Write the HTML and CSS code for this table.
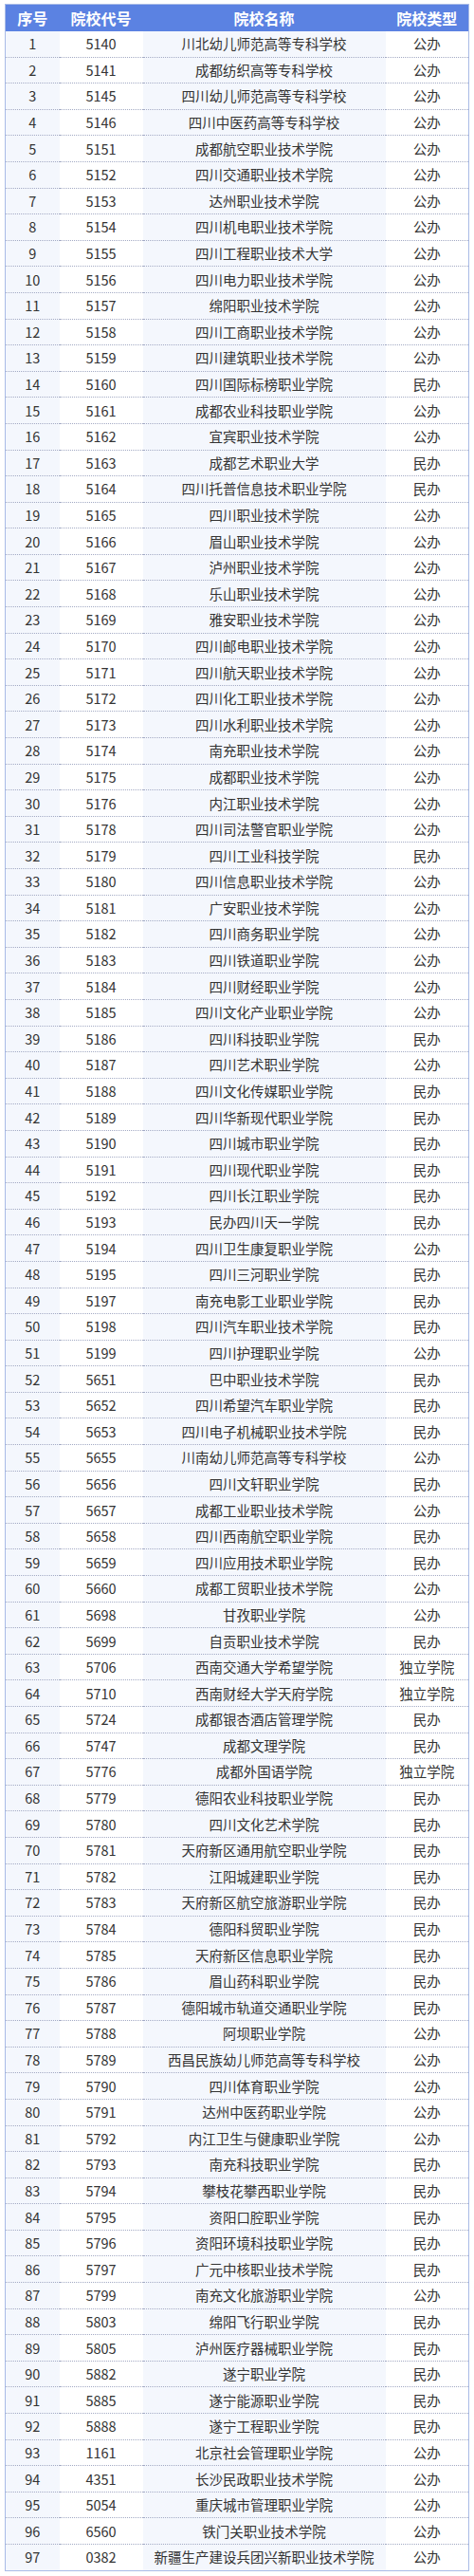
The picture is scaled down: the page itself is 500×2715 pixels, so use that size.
FILE: index.html
```html
<!DOCTYPE html>
<html lang="zh-CN">
<head>
<meta charset="utf-8">
<title>院校列表</title>
<link rel="stylesheet" href="styles.css">
</head>
<body>
<div class="wrap">
<table class="schools">
<colgroup><col class="c1"><col class="c2"><col class="c3"><col class="c4"></colgroup>
<thead>
<tr><th>序号</th><th>院校代号</th><th>院校名称</th><th>院校类型</th></tr>
</thead>
<tbody id="rows">
<tr><td>1</td><td>5140</td><td>川北幼儿师范高等专科学校</td><td>公办</td></tr>
<tr><td>2</td><td>5141</td><td>成都纺织高等专科学校</td><td>公办</td></tr>
<tr><td>3</td><td>5145</td><td>四川幼儿师范高等专科学校</td><td>公办</td></tr>
<tr><td>4</td><td>5146</td><td>四川中医药高等专科学校</td><td>公办</td></tr>
<tr><td>5</td><td>5151</td><td>成都航空职业技术学院</td><td>公办</td></tr>
<tr><td>6</td><td>5152</td><td>四川交通职业技术学院</td><td>公办</td></tr>
<tr><td>7</td><td>5153</td><td>达州职业技术学院</td><td>公办</td></tr>
<tr><td>8</td><td>5154</td><td>四川机电职业技术学院</td><td>公办</td></tr>
<tr><td>9</td><td>5155</td><td>四川工程职业技术大学</td><td>公办</td></tr>
<tr><td>10</td><td>5156</td><td>四川电力职业技术学院</td><td>公办</td></tr>
<tr><td>11</td><td>5157</td><td>绵阳职业技术学院</td><td>公办</td></tr>
<tr><td>12</td><td>5158</td><td>四川工商职业技术学院</td><td>公办</td></tr>
<tr><td>13</td><td>5159</td><td>四川建筑职业技术学院</td><td>公办</td></tr>
<tr><td>14</td><td>5160</td><td>四川国际标榜职业学院</td><td>民办</td></tr>
<tr><td>15</td><td>5161</td><td>成都农业科技职业学院</td><td>公办</td></tr>
<tr><td>16</td><td>5162</td><td>宜宾职业技术学院</td><td>公办</td></tr>
<tr><td>17</td><td>5163</td><td>成都艺术职业大学</td><td>民办</td></tr>
<tr><td>18</td><td>5164</td><td>四川托普信息技术职业学院</td><td>民办</td></tr>
<tr><td>19</td><td>5165</td><td>四川职业技术学院</td><td>公办</td></tr>
<tr><td>20</td><td>5166</td><td>眉山职业技术学院</td><td>公办</td></tr>
<tr><td>21</td><td>5167</td><td>泸州职业技术学院</td><td>公办</td></tr>
<tr><td>22</td><td>5168</td><td>乐山职业技术学院</td><td>公办</td></tr>
<tr><td>23</td><td>5169</td><td>雅安职业技术学院</td><td>公办</td></tr>
<tr><td>24</td><td>5170</td><td>四川邮电职业技术学院</td><td>公办</td></tr>
<tr><td>25</td><td>5171</td><td>四川航天职业技术学院</td><td>公办</td></tr>
<tr><td>26</td><td>5172</td><td>四川化工职业技术学院</td><td>公办</td></tr>
<tr><td>27</td><td>5173</td><td>四川水利职业技术学院</td><td>公办</td></tr>
<tr><td>28</td><td>5174</td><td>南充职业技术学院</td><td>公办</td></tr>
<tr><td>29</td><td>5175</td><td>成都职业技术学院</td><td>公办</td></tr>
<tr><td>30</td><td>5176</td><td>内江职业技术学院</td><td>公办</td></tr>
<tr><td>31</td><td>5178</td><td>四川司法警官职业学院</td><td>公办</td></tr>
<tr><td>32</td><td>5179</td><td>四川工业科技学院</td><td>民办</td></tr>
<tr><td>33</td><td>5180</td><td>四川信息职业技术学院</td><td>公办</td></tr>
<tr><td>34</td><td>5181</td><td>广安职业技术学院</td><td>公办</td></tr>
<tr><td>35</td><td>5182</td><td>四川商务职业学院</td><td>公办</td></tr>
<tr><td>36</td><td>5183</td><td>四川铁道职业学院</td><td>公办</td></tr>
<tr><td>37</td><td>5184</td><td>四川财经职业学院</td><td>公办</td></tr>
<tr><td>38</td><td>5185</td><td>四川文化产业职业学院</td><td>公办</td></tr>
<tr><td>39</td><td>5186</td><td>四川科技职业学院</td><td>民办</td></tr>
<tr><td>40</td><td>5187</td><td>四川艺术职业学院</td><td>公办</td></tr>
<tr><td>41</td><td>5188</td><td>四川文化传媒职业学院</td><td>民办</td></tr>
<tr><td>42</td><td>5189</td><td>四川华新现代职业学院</td><td>民办</td></tr>
<tr><td>43</td><td>5190</td><td>四川城市职业学院</td><td>民办</td></tr>
<tr><td>44</td><td>5191</td><td>四川现代职业学院</td><td>民办</td></tr>
<tr><td>45</td><td>5192</td><td>四川长江职业学院</td><td>民办</td></tr>
<tr><td>46</td><td>5193</td><td>民办四川天一学院</td><td>民办</td></tr>
<tr><td>47</td><td>5194</td><td>四川卫生康复职业学院</td><td>公办</td></tr>
<tr><td>48</td><td>5195</td><td>四川三河职业学院</td><td>民办</td></tr>
<tr><td>49</td><td>5197</td><td>南充电影工业职业学院</td><td>民办</td></tr>
<tr><td>50</td><td>5198</td><td>四川汽车职业技术学院</td><td>民办</td></tr>
<tr><td>51</td><td>5199</td><td>四川护理职业学院</td><td>公办</td></tr>
<tr><td>52</td><td>5651</td><td>巴中职业技术学院</td><td>民办</td></tr>
<tr><td>53</td><td>5652</td><td>四川希望汽车职业学院</td><td>民办</td></tr>
<tr><td>54</td><td>5653</td><td>四川电子机械职业技术学院</td><td>民办</td></tr>
<tr><td>55</td><td>5655</td><td>川南幼儿师范高等专科学校</td><td>公办</td></tr>
<tr><td>56</td><td>5656</td><td>四川文轩职业学院</td><td>民办</td></tr>
<tr><td>57</td><td>5657</td><td>成都工业职业技术学院</td><td>公办</td></tr>
<tr><td>58</td><td>5658</td><td>四川西南航空职业学院</td><td>民办</td></tr>
<tr><td>59</td><td>5659</td><td>四川应用技术职业学院</td><td>民办</td></tr>
<tr><td>60</td><td>5660</td><td>成都工贸职业技术学院</td><td>公办</td></tr>
<tr><td>61</td><td>5698</td><td>甘孜职业学院</td><td>公办</td></tr>
<tr><td>62</td><td>5699</td><td>自贡职业技术学院</td><td>民办</td></tr>
<tr><td>63</td><td>5706</td><td>西南交通大学希望学院</td><td>独立学院</td></tr>
<tr><td>64</td><td>5710</td><td>西南财经大学天府学院</td><td>独立学院</td></tr>
<tr><td>65</td><td>5724</td><td>成都银杏酒店管理学院</td><td>民办</td></tr>
<tr><td>66</td><td>5747</td><td>成都文理学院</td><td>民办</td></tr>
<tr><td>67</td><td>5776</td><td>成都外国语学院</td><td>独立学院</td></tr>
<tr><td>68</td><td>5779</td><td>德阳农业科技职业学院</td><td>民办</td></tr>
<tr><td>69</td><td>5780</td><td>四川文化艺术学院</td><td>民办</td></tr>
<tr><td>70</td><td>5781</td><td>天府新区通用航空职业学院</td><td>民办</td></tr>
<tr><td>71</td><td>5782</td><td>江阳城建职业学院</td><td>民办</td></tr>
<tr><td>72</td><td>5783</td><td>天府新区航空旅游职业学院</td><td>民办</td></tr>
<tr><td>73</td><td>5784</td><td>德阳科贸职业学院</td><td>民办</td></tr>
<tr><td>74</td><td>5785</td><td>天府新区信息职业学院</td><td>民办</td></tr>
<tr><td>75</td><td>5786</td><td>眉山药科职业学院</td><td>民办</td></tr>
<tr><td>76</td><td>5787</td><td>德阳城市轨道交通职业学院</td><td>民办</td></tr>
<tr><td>77</td><td>5788</td><td>阿坝职业学院</td><td>公办</td></tr>
<tr><td>78</td><td>5789</td><td>西昌民族幼儿师范高等专科学校</td><td>公办</td></tr>
<tr><td>79</td><td>5790</td><td>四川体育职业学院</td><td>公办</td></tr>
<tr><td>80</td><td>5791</td><td>达州中医药职业学院</td><td>公办</td></tr>
<tr><td>81</td><td>5792</td><td>内江卫生与健康职业学院</td><td>公办</td></tr>
<tr><td>82</td><td>5793</td><td>南充科技职业学院</td><td>民办</td></tr>
<tr><td>83</td><td>5794</td><td>攀枝花攀西职业学院</td><td>民办</td></tr>
<tr><td>84</td><td>5795</td><td>资阳口腔职业学院</td><td>民办</td></tr>
<tr><td>85</td><td>5796</td><td>资阳环境科技职业学院</td><td>民办</td></tr>
<tr><td>86</td><td>5797</td><td>广元中核职业技术学院</td><td>民办</td></tr>
<tr><td>87</td><td>5799</td><td>南充文化旅游职业学院</td><td>公办</td></tr>
<tr><td>88</td><td>5803</td><td>绵阳飞行职业学院</td><td>民办</td></tr>
<tr><td>89</td><td>5805</td><td>泸州医疗器械职业学院</td><td>民办</td></tr>
<tr><td>90</td><td>5882</td><td>遂宁职业学院</td><td>民办</td></tr>
<tr><td>91</td><td>5885</td><td>遂宁能源职业学院</td><td>民办</td></tr>
<tr><td>92</td><td>5888</td><td>遂宁工程职业学院</td><td>民办</td></tr>
<tr><td>93</td><td>1161</td><td>北京社会管理职业学院</td><td>公办</td></tr>
<tr><td>94</td><td>4351</td><td>长沙民政职业技术学院</td><td>公办</td></tr>
<tr><td>95</td><td>5054</td><td>重庆城市管理职业学院</td><td>公办</td></tr>
<tr><td>96</td><td>6560</td><td>铁门关职业技术学院</td><td>公办</td></tr>
<tr><td>97</td><td>0382</td><td>新疆生产建设兵团兴新职业技术学院</td><td>公办</td></tr>
</tbody>
</table>
</div>
</body>
</html>
```
FILE: styles.css
```css
html, body {
  margin: 0;
  padding: 0;
  background: #ffffff;
}
.wrap {
  padding: 4px 6px 0 5px;
}
.schools {
  width: 489px;
  border-collapse: collapse;
  table-layout: fixed;
  font-family: "Noto Sans CJK SC", "Noto Sans", sans-serif;
  color: #333333;
  border: 1px solid #a9bbe6;
}
.c1 { width: 57px; }
.c2 { width: 88px; }
.c3 { width: 256px; }
.c4 { width: 88px; }
.schools th {
  height: 28px;
  padding: 0;
  background: #5b82e2;
  color: #ffffff;
  font-size: 16px;
  font-weight: 700;
  line-height: 28px;
  text-align: center;
  white-space: nowrap;
}
.schools td {
  height: 26.6px;
  padding: 0;
  font-size: 14.5px;
  line-height: 26px;
  text-align: center;
  white-space: nowrap;
  border-top: 1px dotted #a3aac4;
}
.schools tbody tr:first-child td {
  border-top: none;
}
.schools td:nth-child(1),
.schools td:nth-child(3) {
  background: #f4f7fd;
}
.schools td:nth-child(2),
.schools td:nth-child(4) {
  background: #ffffff;
}
```
